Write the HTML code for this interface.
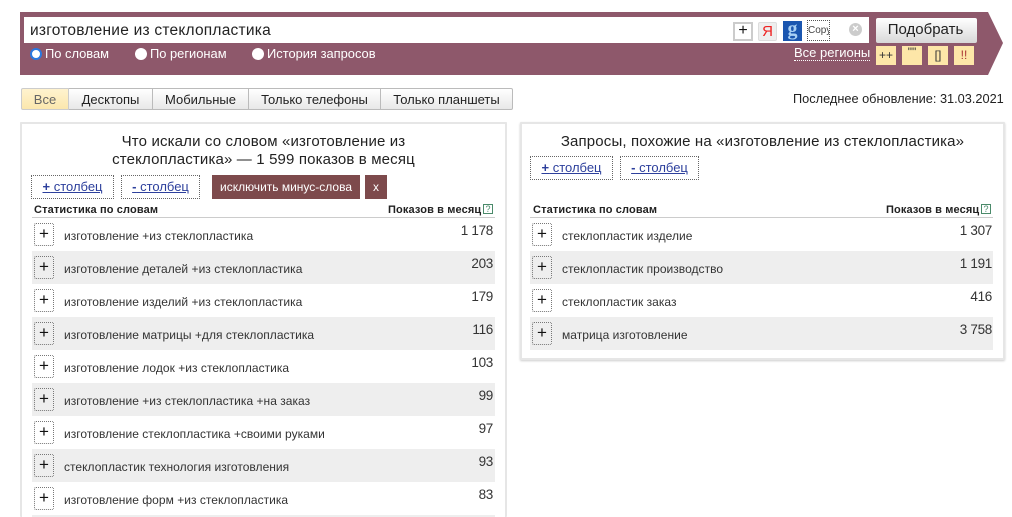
<!DOCTYPE html>
<html><head><meta charset="utf-8"><style>
html,body{margin:0;padding:0;width:1012px;height:517px;overflow:hidden;background:#fff;font-family:"Liberation Sans",sans-serif;color:#222}
#w{position:relative;width:1012px;height:517px;overflow:hidden;background:#fff}
#w div,#w a{position:absolute;white-space:nowrap;box-sizing:border-box}
.panel{background:#fff;border:2px solid #e6e6e6;border-radius:1px}
.t{font-size:12px;line-height:14px;color:#333;letter-spacing:.03px}
.n{font-size:13.5px;line-height:16px;color:#333;text-align:right;width:60px;letter-spacing:-.3px}
.g{background:#eee;height:33px}
.p{width:20px;height:23px;border:1px dotted #777;border-radius:2px;background:#fff;font-size:17px;line-height:19px;text-align:center;color:#111}
.pg{background:#eee}
.col{height:24px;border:1px dotted #666;font-size:13px;line-height:22px;text-align:center;color:#2c3f9c;text-decoration:underline}
.h{font-size:11px;font-weight:bold;line-height:13px;color:#222;letter-spacing:.13px}
.l{height:1px;background:#ccc}
.ttl{font-size:15px;line-height:18px;color:#222;text-align:center;letter-spacing:.15px}
.q{width:10px;height:10px;border:1px solid #4a8a6a;font-size:9px;line-height:8px;text-align:center;color:#4a8a6a}
.tab{top:88px;height:22px;border:1px solid #bbb;border-left:0;background:linear-gradient(#fff,#e8e8e8);font-size:13px;line-height:21px;text-align:center;color:#222}
.y{top:46px;width:20px;height:19px;background:#fde6a8;font-size:12px;line-height:19px;text-align:center;color:#333}
.r{top:47px;font-size:12.9px;line-height:14px;color:#fff}
.dot{width:12px;height:12px;border-radius:50%;background:#fff;top:48px}
</style></head><body><div id="w">
<svg style="position:absolute;left:20px;top:12px" width="984" height="63"><polygon points="0,0 968,0 983,31 968,63 0,63" fill="#8e586b"/></svg>
<div style="left:24px;top:17px;width:845px;height:26px;background:#fff"></div>
<div style="left:30px;top:21px;font-size:15.5px;line-height:20px;color:#222;letter-spacing:.23px">изготовление из стеклопластика</div>
<div style="left:733px;top:22px;width:20px;height:19px;border:2px solid #ccc;background:#fff;font-size:16px;line-height:14px;text-align:center;color:#111">+</div>
<div style="left:758px;top:22px;width:19px;height:19px;background:#eee;border:1px solid #ddd;border-radius:2px;font:15px/17px 'Liberation Sans',sans-serif;text-align:center;color:#e22">Я</div>
<div style="left:783px;top:21px;width:19px;height:20px;background:#1a56b0;font:bold 20px/16px 'Liberation Serif',serif;text-align:center;color:#a8d0f4">g</div>
<div style="left:807px;top:20px;width:23px;height:21px;border:1px dotted #555;font-size:10px;line-height:20px;color:#444;overflow:hidden">Copy</div>
<div style="left:849px;top:23px;width:13px;height:13px;border-radius:50%;background:#ccc;color:#fff;font:bold 11px/13px 'Liberation Sans',sans-serif;text-align:center">×</div>
<div style="left:876px;top:18px;width:101px;height:25px;background:linear-gradient(#fff,#d8d8d8);border-radius:2px;font-size:15px;line-height:24px;text-align:center;color:#222;padding-right:2px">Подобрать</div>
<div style="left:30px;top:48px;width:12px;height:12px;border-radius:50%;background:#fff;border:2px solid #2a78e0"></div>
<div class="r" style="left:45px">По словам</div>
<div class="dot" style="left:135px"></div><div class="r" style="left:150px">По регионам</div>
<div class="dot" style="left:252px"></div><div class="r" style="left:267px">История запросов</div>
<div style="left:794px;top:45px;font-size:13px;line-height:15px;color:#fff;border-bottom:1px dotted #fff">Все регионы</div>
<div class="y" style="left:876px">++</div><div class="y" style="left:902px;line-height:13px">""</div><div class="y" style="left:928px">[]</div><div class="y" style="left:954px;color:#a33">!!</div>

<div class="tab" style="left:21px;width:48px;background:linear-gradient(#fff3cf,#fbe7ad);border:1px solid #ccc;border-radius:2px 0 0 2px;color:#666">Все</div>
<div class="tab" style="left:69px;width:84px">Десктопы</div>
<div class="tab" style="left:153px;width:96px">Мобильные</div>
<div class="tab" style="left:249px;width:132px">Только телефоны</div>
<div class="tab" style="left:381px;width:132px;border-radius:0 2px 2px 0">Только планшеты</div>
<div style="left:793px;top:91px;font-size:12.75px;line-height:15px;color:#222">Последнее обновление: 31.03.2021</div>

<div class="panel" style="left:20px;top:122px;width:487px;height:395px;border-bottom:0"></div>
<div class="ttl" style="left:22px;top:133px;width:483px">Что искали со словом «изготовление из<br>стеклопластика» — 1 599 показов в месяц</div>
<a class="col" style="left:31px;top:175px;width:83px"><b>+</b> столбец</a>
<a class="col" style="left:121px;top:175px;width:79px"><b>-</b> столбец</a>
<div style="left:212px;top:175px;width:148px;height:24px;background:#7d4a4c;color:#fff;font-size:12px;line-height:24px;text-align:center">исключить минус-слова</div>
<div style="left:365px;top:175px;width:22px;height:24px;background:#7d4a4c;color:#fff;font-size:12px;line-height:24px;text-align:center">x</div>
<div class="h" style="left:34px;top:204px">Статистика по словам</div>
<div class="h" style="left:388px;top:204px">Показов в месяц</div>
<div class="q" style="left:483px;top:204px">?</div>
<div class="l" style="left:32px;top:217px;width:463px"></div>

<div class="g" style="left:32px;top:251px;width:463px"></div>
<div class="g" style="left:32px;top:317px;width:463px"></div>
<div class="g" style="left:32px;top:383px;width:463px"></div>
<div class="g" style="left:32px;top:449px;width:463px"></div>
<div class="g" style="left:32px;top:515px;width:463px;height:2px"></div>

<div class="p" style="left:34px;top:223px">+</div><div class="t" style="left:64px;top:229px">изготовление +из стеклопластика</div><div class="n" style="left:433px;top:223px">1 178</div>
<div class="p pg" style="left:34px;top:256px">+</div><div class="t" style="left:64px;top:262px">изготовление деталей +из стеклопластика</div><div class="n" style="left:433px;top:256px">203</div>
<div class="p" style="left:34px;top:289px">+</div><div class="t" style="left:64px;top:295px">изготовление изделий +из стеклопластика</div><div class="n" style="left:433px;top:289px">179</div>
<div class="p pg" style="left:34px;top:322px">+</div><div class="t" style="left:64px;top:328px">изготовление матрицы +для стеклопластика</div><div class="n" style="left:433px;top:322px">116</div>
<div class="p" style="left:34px;top:355px">+</div><div class="t" style="left:64px;top:361px">изготовление лодок +из стеклопластика</div><div class="n" style="left:433px;top:355px">103</div>
<div class="p pg" style="left:34px;top:388px">+</div><div class="t" style="left:64px;top:394px">изготовление +из стеклопластика +на заказ</div><div class="n" style="left:433px;top:388px">99</div>
<div class="p" style="left:34px;top:421px">+</div><div class="t" style="left:64px;top:427px">изготовление стеклопластика +своими руками</div><div class="n" style="left:433px;top:421px">97</div>
<div class="p pg" style="left:34px;top:454px">+</div><div class="t" style="left:64px;top:460px">стеклопластик технология изготовления</div><div class="n" style="left:433px;top:454px">93</div>
<div class="p" style="left:34px;top:487px">+</div><div class="t" style="left:64px;top:493px">изготовление форм +из стеклопластика</div><div class="n" style="left:433px;top:487px">83</div>

<div class="panel" style="left:520px;top:122px;width:485px;height:238px;box-shadow:0 1px 2px #ccc"></div>
<div class="ttl" style="left:522px;top:133px;width:481px">Запросы, похожие на «изготовление из стеклопластика»</div>
<a class="col" style="left:530px;top:156px;width:83px"><b>+</b> столбец</a>
<a class="col" style="left:620px;top:156px;width:79px"><b>-</b> столбец</a>
<div class="h" style="left:533px;top:204px">Статистика по словам</div>
<div class="h" style="left:886px;top:204px">Показов в месяц</div>
<div class="q" style="left:981px;top:204px">?</div>
<div class="l" style="left:530px;top:217px;width:463px"></div>
<div class="g" style="left:530px;top:251px;width:463px"></div>
<div class="g" style="left:530px;top:317px;width:463px"></div>
<div class="p" style="left:532px;top:223px">+</div><div class="t" style="left:562px;top:229px">стеклопластик изделие</div><div class="n" style="left:932px;top:223px">1 307</div>
<div class="p pg" style="left:532px;top:256px">+</div><div class="t" style="left:562px;top:262px">стеклопластик производство</div><div class="n" style="left:932px;top:256px">1 191</div>
<div class="p" style="left:532px;top:289px">+</div><div class="t" style="left:562px;top:295px">стеклопластик заказ</div><div class="n" style="left:932px;top:289px">416</div>
<div class="p pg" style="left:532px;top:322px">+</div><div class="t" style="left:562px;top:328px">матрица изготовление</div><div class="n" style="left:932px;top:322px">3 758</div>
</div></body></html>
